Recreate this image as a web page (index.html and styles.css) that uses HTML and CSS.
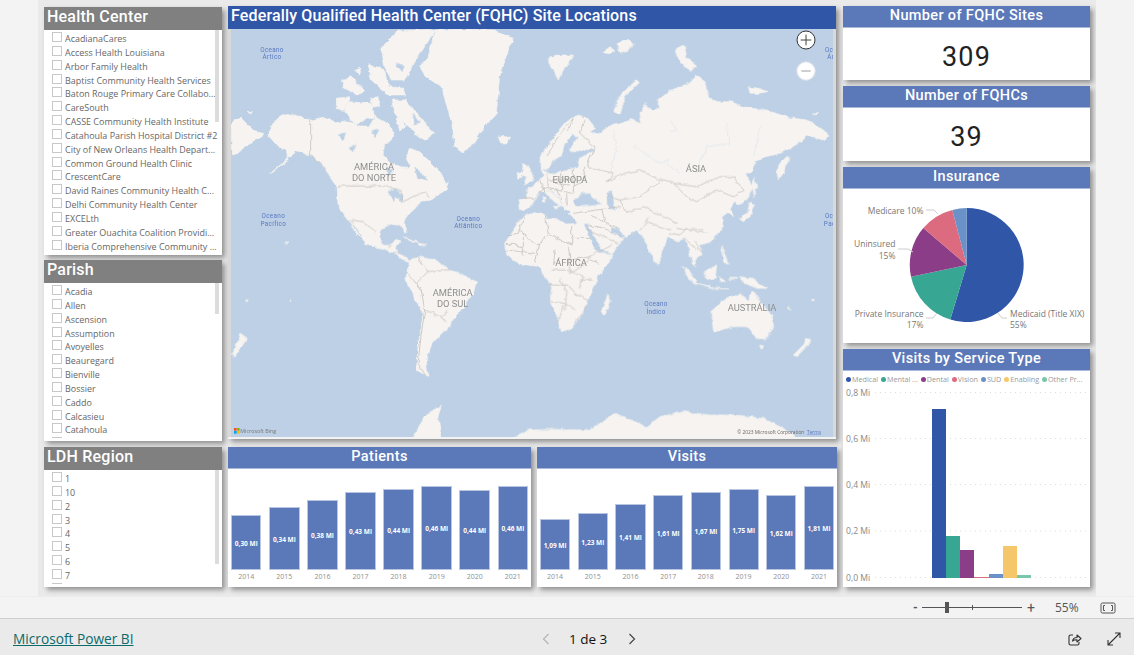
FILE: index.html
```html
<!DOCTYPE html>
<html lang="pt">
<head>
<meta charset="utf-8">
<title>FQHC Site Locations</title>
<link rel="stylesheet" href="styles.css">
</head>
<body>
<main class="report">
<div class="canvas">
  <section class="col col-left">
    <div class="card slicer slicer-hc">
      <h2 class="slicer-title">Health Center</h2>
      <div class="thumb thumb-hc"></div>
      <ul class="list">
        <li class="item"><span class="check"></span>AcadianaCares</li>
        <li class="item"><span class="check"></span>Access Health Louisiana</li>
        <li class="item"><span class="check"></span>Arbor Family Health</li>
        <li class="item"><span class="check"></span>Baptist Community Health Services</li>
        <li class="item"><span class="check"></span>Baton Rouge Primary Care Collabo...</li>
        <li class="item"><span class="check"></span>CareSouth</li>
        <li class="item"><span class="check"></span>CASSE Community Health Institute</li>
        <li class="item"><span class="check"></span>Catahoula Parish Hospital District #2</li>
        <li class="item"><span class="check"></span>City of New Orleans Health Depart...</li>
        <li class="item"><span class="check"></span>Common Ground Health Clinic</li>
        <li class="item"><span class="check"></span>CrescentCare</li>
        <li class="item"><span class="check"></span>David Raines Community Health C...</li>
        <li class="item"><span class="check"></span>Delhi Community Health Center</li>
        <li class="item"><span class="check"></span>EXCELth</li>
        <li class="item"><span class="check"></span>Greater Ouachita Coalition Providi...</li>
        <li class="item"><span class="check"></span>Iberia Comprehensive Community ...</li>
      </ul>
    </div>
    <div class="card slicer slicer-parish">
      <h2 class="slicer-title">Parish</h2>
      <div class="thumb thumb-parish"></div>
      <ul class="list">
        <li class="item"><span class="check"></span>Acadia</li>
        <li class="item"><span class="check"></span>Allen</li>
        <li class="item"><span class="check"></span>Ascension</li>
        <li class="item"><span class="check"></span>Assumption</li>
        <li class="item"><span class="check"></span>Avoyelles</li>
        <li class="item"><span class="check"></span>Beauregard</li>
        <li class="item"><span class="check"></span>Bienville</li>
        <li class="item"><span class="check"></span>Bossier</li>
        <li class="item"><span class="check"></span>Caddo</li>
        <li class="item"><span class="check"></span>Calcasieu</li>
        <li class="item"><span class="check"></span>Catahoula</li>
        <li class="item item-clipped"><span class="check"></span></li>
      </ul>
    </div>
    <div class="card slicer slicer-ldh">
      <h2 class="slicer-title">LDH Region</h2>
      <div class="thumb thumb-ldh"></div>
      <ul class="list">
        <li class="item"><span class="check"></span>1</li>
        <li class="item"><span class="check"></span>10</li>
        <li class="item"><span class="check"></span>2</li>
        <li class="item"><span class="check"></span>3</li>
        <li class="item"><span class="check"></span>4</li>
        <li class="item"><span class="check"></span>5</li>
        <li class="item"><span class="check"></span>6</li>
        <li class="item"><span class="check"></span>7</li>
        <li class="item item-clipped"><span class="check"></span></li>
      </ul>
    </div>
  </section>

  <section class="col col-mid">
    <div class="card map-card">
      <h1 class="map-title">Federally Qualified Health Center (FQHC) Site Locations</h1>
      <svg class="map" viewBox="693 87 1806 1224" aria-label="World map">
        <defs>
          <filter id="coast" filterUnits="userSpaceOnUse" x="693" y="87" width="1806" height="1224">
            <feTurbulence type="fractalNoise" baseFrequency="0.045" numOctaves="3" seed="7" result="n"/>
            <feDisplacementMap in="SourceGraphic" in2="n" scale="13" xChannelSelector="R" yChannelSelector="G"/>
          </filter>
        </defs>
        <g filter="url(#coast)">
        <g class="land">
          <g transform="translate(684 0)">
            <path d="M128 378L150 355 178 340 215 352 250 360 285 352 320 368 355 362 395 378 425 378 440 350 480 372 498 395 490 420 470 432 465 465 490 490 520 505 540 525 545 500 535 470 548 445 575 455 610 490 640 520 660 565 610 600 530 610 330 610 330 560 295 515 280 490 250 465 205 455 185 470 125 522 180 480 175 450 150 440 120 405Z"/>
            <path d="M460 150L475 125 510 92 620 88 600 125 570 170 530 240 490 240 470 200Z"/>
            <path d="M420 190L470 210 480 260 530 265 535 285 480 285 430 240Z"/>
            <path d="M340 240L370 230 410 270 390 285 350 265Z"/>
            <path d="M380 210L400 205 395 225Z"/>
            <path d="M430 295L450 290 455 320 435 325Z"/>
            <path d="M325 295L365 290 350 330 325 330Z"/>
            <path d="M360 305L430 310 440 350 380 372 350 335Z"/>
            <path d="M490 300L530 300 560 330 590 370 620 400 590 420 560 400 530 370 500 340Z"/>
            <path d="M575 200L600 175 620 90 700 88 800 90 855 115 835 170 815 230 805 340 770 380 745 420 705 460 680 440 675 390 660 330 640 260 590 225Z"/>
            <path d="M808 415L830 405 848 412 835 432 815 432Z"/>
            <path d="M10 365L40 355 80 395 110 400 105 410 60 430 30 460 10 465Z"/>
            <path d="M60 338L75 335 72 343Z"/>
            <path d="M505 360L520 350 530 380 515 390Z"/>
          </g>
          <g transform="translate(960 510)">
            <path d="M50 30L55 110 85 150 115 195 140 225 175 235 200 240 225 250 245 270 270 278 262 265 240 255 225 235 240 215 222 210 210 228 190 225 175 200 180 180 215 165 245 165 258 190 262 185 250 150 285 115 300 95 340 65 385 55 365 30 340 0 50 -20Z"/>
            <path d="M250 200L285 212 300 222 270 212Z"/>
            <path d="M298 220L320 224 300 227Z"/>
            <path d="M360 45L385 35 380 55 365 58Z"/>
          </g>
          <g transform="translate(684 660)">
            <path d="M545 120L570 110 620 120 670 150 745 185 735 225 690 280 665 320 640 340 610 375 595 420 600 470 565 450 570 380 585 280 530 180 540 155Z"/>
            <path d="M555 655L590 590 640 555 630 590 640 655Z"/>
            <path d="M855 655L900 630 930 640 930 655Z"/>
            <path d="M10 405L25 375 40 340 55 360 45 375 20 410Z"/>
            <path d="M172 62l8 6-4 4zM52 240h10v4h-10zM183 238h5v4h-5z"/>
          </g>
          <g transform="translate(1590 0)">
            <path d="M30 500L30 470 60 430 85 392 110 362 145 345 175 358 197 385 180 395 200 405 245 375 300 358 335 372 330 340 345 310 365 330 385 325 385 300 420 272 480 248 495 225 525 245 535 290 560 305 600 305 650 322 720 335 770 352 830 360 870 385 897 408 880 420 830 408 790 440 750 460 710 470 680 480 665 510 650 525 670 560 650 600 625 615 615 600 600 625 610 650 590 640 575 650 578 680 150 680 45 540Z"/>
            <path d="M250 340L265 290 320 240 328 248 285 290 270 345Z"/>
            <path d="M55 175L90 165 130 165 110 195 85 240 70 210Z"/>
            <path d="M220 155L240 140 255 155 235 162ZM262 130L290 118 310 130 285 160 265 150Z"/>
            <path d="M440 145L462 135 470 170 500 200 480 215 440 170Z"/>
            <path d="M655 260L685 265 712 275 690 280 660 280Z"/>
            <path d="M848 338L862 340 855 345Z"/>
            <path d="M740 510L750 490 775 465 780 470 760 520 745 540Z"/>
            <path d="M672 530L680 560 672 590 668 560Z"/>
            <path d="M625 655L650 640 662 605 672 615 660 650 640 665Z"/>
          </g>
          <g transform="translate(1470 450)">
            <path d="M85 150L110 145 110 118 128 110 145 90 172 72 215 62 280 50 390 40 390 260 325 300 285 225 300 195 335 178 250 190 248 168 232 158 238 180 225 178 218 155 192 125 178 120 165 125 150 125 135 145 135 148 120 175 100 185 88 180Z"/>
            <path d="M178 122L192 130 218 165 222 172 210 165 208 175 198 160 176 138 165 128Z"/>
            <path d="M190 168L205 170 198 178ZM160 142h7v14h-7zM235 190h12v3h-12z"/>
            <path d="M100 40L118 55 130 85 130 95 100 105 110 80 95 75Z"/>
            <path d="M82 70L98 68 95 85 82 88Z"/>
            <path d="M105 195L125 188 165 190 172 208 200 205 228 222 280 220 300 270 320 300 365 320 325 380 305 420 295 450 270 500 250 530 215 545 205 510 180 455 185 405 165 380 145 350 84 340 50 315 44 280 70 240 85 215Z"/>
          </g>
          <g transform="translate(1590 660)">
            <path d="M578 -25L575 30 545 65 510 75 516 105 495 120 497 140 488 130 475 85 465 55 440 65 415 45 388 125 375 125 345 60 320 30 285 50 265 80 240 110 205 100 170 30 160 -25Z"/>
            <path d="M212 280L232 225 242 235 225 285Z"/>
            <path d="M380 120L390 130 380 132Z"/>
            <path d="M455 140L480 155 505 195 495 190 465 160Z"/>
            <path d="M505 193L545 203 595 207 540 205Z"/>
            <path d="M520 155L560 135 555 175 530 178Z"/>
            <path d="M575 80L595 130 580 125Z"/>
            <path d="M565 170L585 185 570 185Z"/>
            <path d="M625 170L670 175 710 205 680 205 645 190Z"/>
            <path d="M542 275L590 235 630 220 655 240 670 215 690 245 725 285 728 320 710 358 680 355 650 320 610 320 555 335 548 300Z"/>
            <path d="M688 375L702 378 695 388Z"/>
            <path d="M790 405L820 375 825 355 843 358 830 380 800 410Z"/>
            <path d="M0 630L70 628 180 630 255 580 350 620 390 590 460 575 540 585 620 585 700 595 760 625 810 660 0 660Z"/>
            <path d="M775 260l8 6-5 2zM845 240h8v3h-8zM600 175h20v3h-20z"/>
          </g>
        </g>
        <g class="water">
          <g transform="translate(1470 450)">
            <path d="M255 148L275 130 300 128 305 140 335 158 320 165 270 168 252 160Z"/>
            <path d="M350 130L365 125 370 150 375 178 362 180 352 160Z"/>
            <path d="M158 62L178 58 185 40 215 20 225 -20 245 -45 262 -38 245 -15 238 5 262 8 305 -5 310 5 268 22 262 48 225 62 190 68Z"/>
            <path d="M283 222L292 222 335 298 365 310 320 305 300 268Z"/>
          </g>
          <g transform="translate(1590 660)">
            <path d="M243 22L262 28 285 48 270 55 262 40 245 35Z"/>
          </g>
          <g transform="translate(960 510)">
            <path d="M205 65L225 60 250 75 245 95 225 80 222 95 215 78Z"/>
            <path d="M95 155L125 200" class="thin"/>
          </g>
          <g transform="translate(684 0)">
            <path d="M330 405L355 395 345 420ZM362 445L385 435 375 455ZM430 395L450 390 445 410ZM515 425L530 418 528 440ZM560 500L600 540 570 535ZM475 500L495 510 480 530Z"/>
            <path d="M500 190L530 200 520 215ZM470 280L490 290 475 310ZM555 340L575 365 560 375Z"/>
          </g>
        </g>
        <g class="rivers">
          <g transform="translate(1590 0)">
            <path d="M250 390L260 440 240 520M320 430L310 440 390 490 420 480M420 360L440 390 420 395M590 370L600 430 530 440 500 520M690 380L670 470M450 520L410 490"/>
          </g>
        </g>
        <g class="borders">
          <g transform="translate(684 0)">
            <path d="M248 360L248 465 280 490 295 515"/>
            <path d="M330 558L470 558 520 575 525 605 590 575 600 590"/>
          </g>
          <g transform="translate(960 510)">
            <path d="M85 150L130 155 170 185"/>
            <path d="M205 235L215 225M225 245L240 250"/>
          </g>
          <g transform="translate(684 660)">
            <path d="M570 110L600 155 630 150 670 150"/>
            <path d="M540 160L580 210 590 270 580 340 570 430 595 470"/>
            <path d="M590 270L640 290 655 310M600 155L565 190 580 210M640 290L660 270"/>
          </g>
          <g transform="translate(1590 0)">
            <path d="M50 470L90 400 130 355M130 355L115 390M165 360L150 400 195 440 170 500 250 520 235 545"/>
            <path d="M230 545L285 520 330 510 390 540 430 550 470 590 500 605 560 570 610 590 640 570 610 530 570 530 500 560 430 550"/>
            <path d="M235 590L270 600 330 590 390 545M270 600L290 640 340 620 380 640 440 670"/>
          </g>
          <g transform="translate(1470 450)">
            <path d="M100 145L135 148M150 90L165 125M145 130L165 115 200 120 245 130M170 72L175 110M215 62L215 120M175 90L250 90M250 55L250 130M200 120L215 150M230 130L232 165M280 50L285 90 250 110M195 100L240 105"/>
            <path d="M250 190L335 178M335 178L345 215 390 240M300 195L345 215M295 225L345 235 390 260M335 178L390 170"/>
            <path d="M105 195L85 250 50 255M85 240L150 290M165 190L175 250 150 280M175 250L245 285 245 225M245 265L300 265M150 280L135 340M235 285L240 330M50 280L100 290M100 250L100 320M195 300L190 345M240 330L300 320M300 330L330 340M50 300L135 310"/>
          </g>
          <g transform="translate(1590 660)">
            <path d="M60 195L115 195 140 230M90 175L110 220 105 270M60 245L110 250 135 270M85 300L100 255M130 220L175 240M110 150L160 170 150 205M65 150L110 150M115 110L120 160 165 130 200 90M150 180L190 180M140 300L170 255M205 100L245 75M170 30L265 70"/>
            <path d="M330 30L355 -5M420 30L350 5M420 40L450 45 470 25 520 30M470 60L500 90M495 60L515 100M440 25L530 40"/>
          </g>
        </g>
        </g>
        <g class="continent">
          <text x="1122" y="510">AMÉRICA</text>
          <text x="1122" y="544">DO NORTE</text>
          <text x="2088" y="516">ÁSIA</text>
          <text x="1710" y="549">EUROPA</text>
          <text x="1713" y="799">ÁFRICA</text>
          <text x="1358" y="888">AMÉRICA</text>
          <text x="1358" y="920">DO SUL</text>
          <text x="2256" y="934">AUSTRÁLIA</text>
        </g>
        <g class="ocean">
          <text x="816" y="155">Oceano</text>
          <text x="816" y="177">Ártico</text>
          <text x="820" y="655">Oceano</text>
          <text x="820" y="677">Pacífico</text>
          <text x="1405" y="662">Oceano</text>
          <text x="1405" y="684">Atlântico</text>
          <text x="1968" y="919">Oceano</text>
          <text x="1968" y="941">Índico</text>
          <text x="2510" y="155">Oceano</text>
          <text x="2510" y="177">Ártico</text>
          <text x="2510" y="655">Oceano</text>
          <text x="2510" y="677">Pacífico</text>
        </g>
        <g class="bing">
          <rect x="702" y="1284" width="8" height="8" fill="#f25022"/>
          <rect x="711" y="1284" width="8" height="8" fill="#7fba00"/>
          <rect x="702" y="1293" width="8" height="8" fill="#00a4ef"/>
          <rect x="711" y="1293" width="8" height="8" fill="#ffb900"/>
          <text x="721" y="1299">Microsoft Bing</text>
        </g>
        <text class="copy" x="2212" y="1301">© 2023 Microsoft Corporation</text>
        <text class="terms" x="2421" y="1301">Terms</text>
        <g>
          <circle class="zoom-in" cx="2418" cy="120" r="27"/>
          <path class="zoom-in-sign" d="M2402 120H2434M2418 104V136"/>
          <circle class="zoom-out" cx="2418" cy="213" r="28"/>
          <path class="zoom-out-sign" d="M2404 213H2432"/>
        </g>
      </svg>
    </div>
    <div class="chart-row">
      <div class="card bars-card bars-patients">
        <h2 class="blue-title">Patients</h2>
        <div class="plot">
          <div class="bar-col"><div class="bar" style="height:55px">0,30 Mi</div><span class="year">2014</span></div>
          <div class="bar-col"><div class="bar" style="height:63px">0,34 Mi</div><span class="year">2015</span></div>
          <div class="bar-col"><div class="bar" style="height:70px">0,38 Mi</div><span class="year">2016</span></div>
          <div class="bar-col"><div class="bar" style="height:78px">0,43 Mi</div><span class="year">2017</span></div>
          <div class="bar-col"><div class="bar" style="height:81px">0,44 Mi</div><span class="year">2018</span></div>
          <div class="bar-col"><div class="bar" style="height:84px">0,46 Mi</div><span class="year">2019</span></div>
          <div class="bar-col"><div class="bar" style="height:80px">0,44 Mi</div><span class="year">2020</span></div>
          <div class="bar-col"><div class="bar" style="height:84px">0,46 Mi</div><span class="year">2021</span></div>
        </div>
      </div>
      <div class="card bars-card bars-visits">
        <h2 class="blue-title">Visits</h2>
        <div class="plot">
          <div class="bar-col"><div class="bar" style="height:51px">1,09 Mi</div><span class="year">2014</span></div>
          <div class="bar-col"><div class="bar" style="height:57px">1,23 Mi</div><span class="year">2015</span></div>
          <div class="bar-col"><div class="bar" style="height:66px">1,41 Mi</div><span class="year">2016</span></div>
          <div class="bar-col"><div class="bar" style="height:75px">1,61 Mi</div><span class="year">2017</span></div>
          <div class="bar-col"><div class="bar" style="height:78px">1,67 Mi</div><span class="year">2018</span></div>
          <div class="bar-col"><div class="bar" style="height:81px">1,75 Mi</div><span class="year">2019</span></div>
          <div class="bar-col"><div class="bar" style="height:75px">1,62 Mi</div><span class="year">2020</span></div>
          <div class="bar-col"><div class="bar" style="height:84px">1,81 Mi</div><span class="year">2021</span></div>
        </div>
      </div>
    </div>
  </section>

  <section class="col col-right">
    <div class="card kpi kpi-sites">
      <h2 class="blue-title">Number of FQHC Sites</h2>
      <div class="kpi-value">309</div>
    </div>
    <div class="card kpi kpi-centers">
      <h2 class="blue-title">Number of FQHCs</h2>
      <div class="kpi-value">39</div>
    </div>
    <div class="card insurance">
      <h2 class="blue-title">Insurance</h2>
      <svg class="pie" viewBox="843 189 247 154" aria-label="Insurance pie chart">
        <path fill="#3056a8" d="M966.7 265V208A57 57 0 1 1 950.3 319.6Z"/>
        <path fill="#37a794" d="M966.7 265L950.3 319.6A57 57 0 0 1 911 276.7Z"/>
        <path fill="#8b3d88" d="M966.7 265L911 276.7A57 57 0 0 1 923.3 228Z"/>
        <path fill="#dd6b7f" d="M966.7 265L923.3 228A57 57 0 0 1 952.3 209.9Z"/>
        <path fill="#6b91c9" d="M966.7 265L952.3 209.9A57 57 0 0 1 966.7 208Z"/>
        <path class="leader" d="M926 210H934L938 214M898 249H908L913 252M926 318H933L937 313M1007 318H1002L998 313"/>
        <text class="pie-label end" x="923.500" y="214">Medicare 10%</text>
        <text class="pie-label end" x="895.500" y="247">Uninsured</text>
        <text class="pie-label end" x="895.500" y="259">15%</text>
        <text class="pie-label end" x="923.500" y="317">Private Insurance</text>
        <text class="pie-label end" x="923.500" y="328">17%</text>
        <text class="pie-label" x="1010" y="317">Medicaid (Title XIX)</text>
        <text class="pie-label" x="1010" y="328">55%</text>
      </svg>
    </div>
    <div class="card service">
      <h2 class="blue-title">Visits by Service Type</h2>
      <ul class="legend">
        <li class="legend-item"><span class="dot dot-medical"></span>Medical</li>
        <li class="legend-item"><span class="dot dot-mental"></span>Mental ...</li>
        <li class="legend-item"><span class="dot dot-dental"></span>Dental</li>
        <li class="legend-item"><span class="dot dot-vision"></span>Vision</li>
        <li class="legend-item"><span class="dot dot-sud"></span>SUD</li>
        <li class="legend-item"><span class="dot dot-enabling"></span>Enabling</li>
        <li class="legend-item"><span class="dot dot-other"></span>Other Pr...</li>
      </ul>
      <svg class="columns" viewBox="843 385 247 202" aria-label="Visits by service type chart">
        <path class="grid" d="M875 392.500H1088M875 438.500H1088M875 484.500H1088M875 531H1088M875 577.500H1088"/>
        <text class="axis" x="846" y="396">0,8 Mi</text>
        <text class="axis" x="846" y="442">0,6 Mi</text>
        <text class="axis" x="846" y="488">0,4 Mi</text>
        <text class="axis" x="846" y="534">0,2 Mi</text>
        <text class="axis" x="846" y="581">0,0 Mi</text>
        <rect x="932" y="409" width="14" height="169" fill="#3056a8"/>
        <rect x="946" y="536" width="14" height="42" fill="#37a794"/>
        <rect x="960" y="550" width="14" height="28" fill="#8b3d88"/>
        <rect x="974" y="577" width="15" height="1" fill="#dd6b7f"/>
        <rect x="989" y="574" width="14" height="4" fill="#6b91c9"/>
        <rect x="1003" y="546" width="14" height="32" fill="#f5c76a"/>
        <rect x="1017" y="575" width="14" height="3" fill="#78c6ab"/>
      </svg>
    </div>
  </section>
</div>
</main>

<div class="zoombar">
  <span class="zoom-sign">-</span>
  <div class="slider"><span class="slider-tick"></span><span class="slider-thumb"></span></div>
  <span class="zoom-sign zoom-plus">+</span>
  <span class="zoom-pct">55%</span>
  <svg class="fit-icon" viewBox="0 0 16 12" width="16" height="12">
    <rect x="1" y="1" width="14" height="10" rx="1.500" fill="none" stroke="#555" stroke-width="1"/>
    <path d="M5 3.500H3.500V8.500H5M11 3.500H12.500V8.500H11" fill="none" stroke="#555" stroke-width="1"/>
  </svg>
</div>

<footer class="footer">
  <a class="brand" href="#">Microsoft Power BI</a>
  <nav class="pager">
    <svg class="chev" viewBox="0 0 8 12" width="8" height="12"><path d="M6.500 1L1.500 6L6.500 11" fill="none" stroke="#b5b5b5" stroke-width="1.200"/></svg>
    <span class="page-label">1 de 3</span>
    <svg class="chev chev-next" viewBox="0 0 8 12" width="8" height="12"><path d="M1.500 1L6.500 6L1.500 11" fill="none" stroke="#444" stroke-width="1.200"/></svg>
  </nav>
  <div class="foot-icons">
    <svg viewBox="0 0 14 14" width="14" height="14"><path d="M5 3H2.500A1.500 1.500 0 0 0 1 4.500V11.500A1.500 1.500 0 0 0 2.500 13H9.500A1.500 1.500 0 0 0 11 11.500V10" fill="none" stroke="#333" stroke-width="1.100"/><path d="M4.500 9C5 6.500 7 5.500 9 5.500V3L13 6.500L9 10V7.800C7 7.800 5.500 8 4.500 9Z" fill="none" stroke="#333" stroke-width="1.100" stroke-linejoin="round"/></svg>
    <svg viewBox="0 0 14 14" width="14" height="14"><path d="M1 13L13 1M8 1H13V6M1 8V13H6" fill="none" stroke="#333" stroke-width="1.100"/></svg>
  </div>
</footer>
</body>
</html>
```

FILE: styles.css
```css
* { box-sizing: border-box; }
html, body { margin: 0; height: 100%; }
body {
  width: 1134px;
  height: 655px;
  overflow: hidden;
  display: flex;
  flex-direction: column;
  background: #f3f3f3;
  font-family: "Open Sans", "Noto Sans", sans-serif;
}
h1, h2, ul { margin: 0; padding: 0; list-style: none; }

.report { height: 596px; padding: 0 38px; }
.canvas {
  width: 1058px;
  height: 596px;
  background: #eaeaea;
  display: flex;
  padding-left: 6px;
  gap: 6px;
  overflow: hidden;
}
.col { display: flex; flex-direction: column; flex: none; }
.col-left { width: 178px; padding-top: 7px; }
.col-mid { width: 609px; padding-top: 6px; }
.col-right { width: 247px; padding-top: 6px; gap: 6px; }

.card {
  position: relative;
  background: #fff;
  box-shadow: 3px 3px 5px rgba(0, 0, 0, .38);
  flex: none;
}

/* Slicers */
.slicer { display: flex; flex-direction: column; }
.slicer-hc { height: 248px; margin-bottom: 5px; }
.slicer-parish { height: 181px; margin-bottom: 6px; }
.slicer-ldh { height: 140px; }
.slicer-title {
  height: 23px;
  flex: none;
  background: #808080;
  color: #fff;
  font: 500 16px/20px Roboto, sans-serif;
  letter-spacing: .22px;
  padding-left: 3px;
}
.list { flex: 1; min-height: 0; overflow: hidden; margin: 2px 0 3px; }
.item {
  height: 13.85px;
  display: flex;
  padding-left: 8px;
  color: #666;
  font-size: 8.95px;
  line-height: 13.4px;
  white-space: nowrap;
}
.check {
  flex: none;
  width: 10px;
  height: 10px;
  margin-right: 3px;
  background: #fff;
  border: 1px solid #c8c8c8;
}
.thumb { position: absolute; right: 3px; top: 23px; width: 4px; background: #dcdcdc; }
.thumb-hc { height: 92px; }
.thumb-parish { height: 31px; }
.thumb-ldh { height: 94px; }

/* Map */
.map-card {
  height: 433px;
  width: 608px;
  margin-bottom: 8px;
  background: #d9d9d9;
  border-bottom: 2px solid #f3f3f3;
}
.map-title {
  height: 23px;
  background: #3056a8;
  color: #fff;
  font: 500 16px/20px Roboto, sans-serif;
  letter-spacing: .15px;
  padding-left: 3px;
  white-space: nowrap;
}
.map {
  display: block;
  width: 602px;
  height: 408px;
  margin-left: 3px;
  background: #bdd0e5;
}
.land path { fill: #f6f3f0; stroke: #f6f3f0; stroke-width: 2; stroke-linejoin: round; }
.water path { fill: #bdd0e5; stroke: #bdd0e5; stroke-width: 1; }
.water .thin { fill: none; stroke-width: 3; }
.rivers path { fill: none; stroke: #dde6f0; stroke-width: 2; }
.borders path { fill: none; stroke: #c9c5c2; stroke-width: 2.6; stroke-linejoin: round; }
.continent text { fill: #8f8f8f; font: 28px Roboto, sans-serif; text-anchor: middle; }
.ocean text { fill: #5a78c2; font: 19px Roboto, sans-serif; text-anchor: middle; letter-spacing: 1px; }
.bing text { fill: #777; font: 16px "Open Sans", sans-serif; }
.copy { fill: #666; font: 14.4px "Open Sans", sans-serif; }
.terms { fill: #5a78c2; font: 14.4px "Open Sans", sans-serif; text-decoration: underline; }
.zoom-in { fill: #fff; stroke: #333; stroke-width: 3; }
.zoom-in-sign { stroke: #444; stroke-width: 3; fill: none; }
.zoom-out { fill: #fff; stroke: #d5dde8; stroke-width: 4; }
.zoom-out-sign { stroke: #c4c4c4; stroke-width: 5; fill: none; }

/* Blue titled cards */
.blue-title {
  height: 22px;
  background: #5b78b8;
  border-bottom: 1px solid #a9b9dc;
  color: #fff;
  font: 500 14.5px/20px Roboto, sans-serif;
  letter-spacing: .35px;
  text-align: center;
  white-space: nowrap;
}

/* Bars */
.chart-row { display: flex; gap: 6px; }
.bars-card { height: 140px; display: flex; flex-direction: column; flex: none; }
.bars-patients { width: 303px; }
.bars-visits { width: 300px; }
.plot {
  flex: 1;
  display: flex;
  gap: 7.6px;
  align-items: flex-end;
  padding: 0 3px 3px;
}
.bar-col { flex: 1; display: flex; flex-direction: column; }
.bar {
  background: #5b78b8;
  border: 1px solid #b9c6e2;
  padding-top: 3px;
  color: #fff;
  font: 700 6.5px/1 "Open Sans", sans-serif;
  display: flex;
  align-items: center;
  justify-content: center;
  white-space: nowrap;
}
.year { height: 14px; color: #8f8f8f; font-size: 7px; line-height: 14px; text-align: center; }

/* KPI */
.kpi { display: flex; flex-direction: column; }
.kpi-sites { height: 74px; }
.kpi-centers { height: 75px; }
.kpi-value {
  flex: 1;
  display: flex;
  align-items: center;
  justify-content: center;
  color: #222;
  font: 400 27px/1 Roboto, sans-serif;
  letter-spacing: 1.2px;
  padding-top: 6px;
}

/* Pie */
.insurance { height: 176px; }
.pie { display: block; width: 247px; height: 154px; }
.pie-label { fill: #777; font: 8.5px "Open Sans", sans-serif; }
.pie-label.end { text-anchor: end; }
.leader { fill: none; stroke: #ccc; stroke-width: 1; }

/* Service chart */
.service { height: 238px; }
.legend {
  height: 14px;
  display: flex;
  gap: 3px;
  padding: 2px 0 0 3px;
  color: #999;
  font-size: 7.2px;
  line-height: 12px;
  white-space: nowrap;
}
.legend-item { display: flex; align-items: center; gap: 1px; }
.dot { width: 5px; height: 5px; border-radius: 50%; }
.dot-medical { background: #3056a8; }
.dot-mental { background: #37a794; }
.dot-dental { background: #8b3d88; }
.dot-vision { background: #dd6b7f; }
.dot-sud { background: #6b91c9; }
.dot-enabling { background: #f5c76a; }
.dot-other { background: #78c6ab; }
.columns { display: block; width: 247px; height: 202px; }
.grid { stroke: #ddd; stroke-width: 1; stroke-dasharray: 1 4; fill: none; }
.axis { fill: #888; font: 8.6px "Open Sans", sans-serif; }

/* Zoom bar */
.zoombar {
  height: 23px;
  flex: none;
  display: flex;
  align-items: center;
  background: #f3f3f3;
  border-top: 1px solid #ececec;
  border-bottom: 1px solid #cfcfcf;
  padding-left: 913px;
  color: #555;
}
.zoom-sign { width: 9px; font: 700 12px/1 Roboto, sans-serif; }
.slider { position: relative; width: 100px; height: 1px; background: #555; margin-right: 5px; }
.slider-tick { position: absolute; left: 50px; top: -2px; width: 1px; height: 5px; background: #555; }
.slider-thumb { position: absolute; left: 23px; top: -5px; width: 4px; height: 11px; background: #555; }
.zoom-plus { font-weight: 400; font-size: 14px; width: 28px; }
.zoom-pct { width: 45px; font-size: 12px; }
.fit-icon { flex: none; }

/* Footer */
.footer {
  flex: 1;
  display: flex;
  align-items: center;
  background: #eaeaea;
  padding: 3px 0 0 13px;
  position: relative;
}
.brand { color: #0b6a6a; font-size: 13.7px; text-decoration: underline; }
.pager {
  position: absolute;
  left: 542px;
  top: 3px;
  bottom: 0;
  display: flex;
  align-items: center;
  gap: 19px;
}
.chev-next { margin-left: 2px; }
.page-label { color: #111; font-size: 13.5px; font-weight: 500; }
.foot-icons {
  margin-left: auto;
  margin-right: 13px;
  display: flex;
  gap: 25px;
}
```
